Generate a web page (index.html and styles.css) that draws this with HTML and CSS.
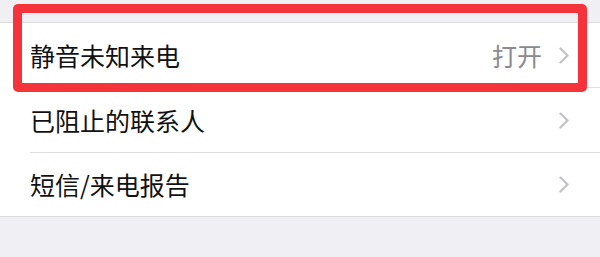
FILE: index.html
```html
<!DOCTYPE html>
<html lang="zh-CN">
<head>
    <meta charset="utf-8">
    <meta name="viewport" content="width=device-width, initial-scale=1">
    <title>电话</title>
    <link rel="stylesheet" href="styles.css">
</head>
<body>
<div class="page">
    <ul class="list">
        <li class="row">
            <span class="label">静音未知来电</span>
            <span class="value">打开</span>
            <svg class="chevron" viewBox="0 0 10 17"><path d="M1.5 1.5 L8.5 8.5 L1.5 15.5"/></svg>
        </li>
        <li class="row">
            <span class="label">已阻止的联系人</span>
            <svg class="chevron" viewBox="0 0 10 17"><path d="M1.5 1.5 L8.5 8.5 L1.5 15.5"/></svg>
        </li>
        <li class="row">
            <span class="label">短信/来电报告</span>
            <svg class="chevron" viewBox="0 0 10 17"><path d="M1.5 1.5 L8.5 8.5 L1.5 15.5"/></svg>
        </li>
    </ul>
    <!-- 标注框 -->
    <div class="highlight"></div>
</div>
</body>
</html>
```

FILE: styles.css
```css
html, body {
    margin: 0;
    padding: 0;
    background: #efeff4;
}
.page {
    position: relative;
    height: 257px;
    padding-top: 22px;
    box-sizing: border-box;
    font-family: "Noto Sans CJK SC", "Noto Sans", sans-serif;
}
.list {
    list-style: none;
    margin: 0;
    padding: 0 0 0 30px;
    background: #fff;
    border-top: 1px solid #dcdce0;
    border-bottom: 1px solid #dcdce0;
}
.row {
    display: flex;
    align-items: center;
    height: 64px;
    padding-right: 31px;
    border-bottom: 1px solid #dedee2;
}
.row:last-child {
    border-bottom: none;
    height: 63px;
}
.label {
    flex: 1;
    font-size: 25px;
    color: #111;
    line-height: 1;
}
.value {
    font-size: 25px;
    color: #8a8a8f;
    line-height: 1;
    margin-right: 17px;
}
.chevron {
    width: 10px;
    height: 17px;
    fill: none;
    stroke: #c4c4c8;
    stroke-width: 2.4;
    stroke-linecap: round;
    stroke-linejoin: round;
}
.highlight {
    position: absolute;
    left: 13px;
    top: 4px;
    width: 574px;
    height: 88px;
    box-sizing: border-box;
    border: 9px solid #f5333b;
    border-radius: 5px;
}
```
